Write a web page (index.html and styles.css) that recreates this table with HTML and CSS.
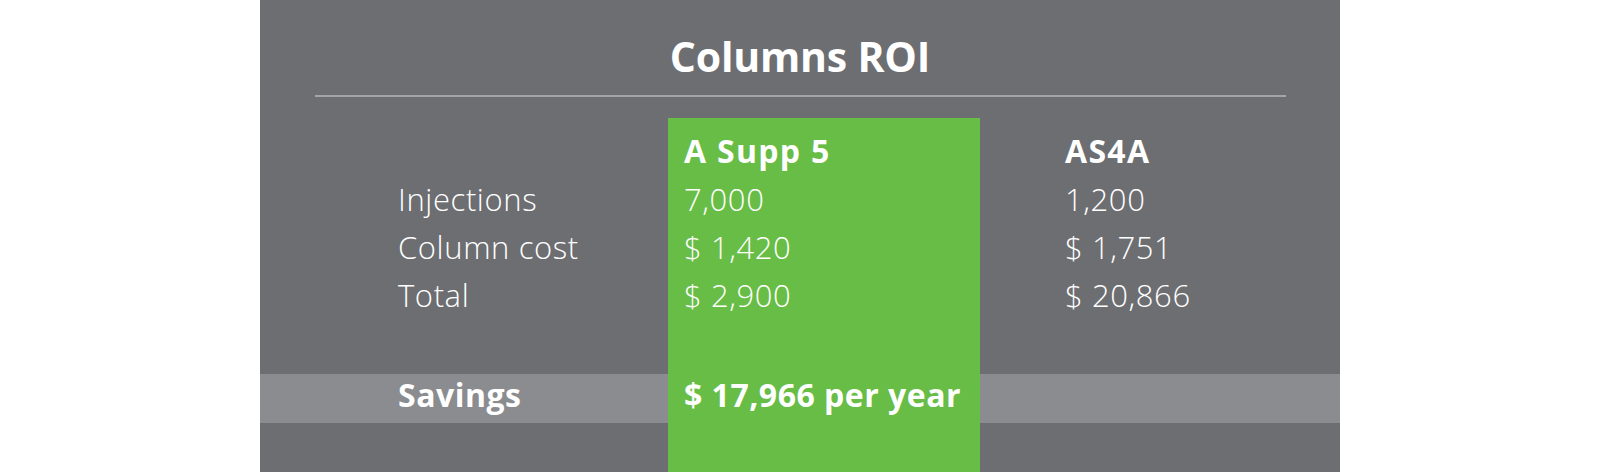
FILE: index.html
```html
<!DOCTYPE html>
<html lang="en">
<head>
<meta charset="utf-8">
<title>Columns ROI</title>
<link rel="stylesheet" href="styles.css">
</head>
<body>
<div class="panel">
  <h1 class="title">Columns ROI</h1>
  <hr class="rule">
  <div class="roi">
    <div class="row head">
      <div class="cell label"></div>
      <div class="cell mid">A Supp 5</div>
      <div class="cell right">AS4A</div>
    </div>
    <div class="row">
      <div class="cell label">Injections</div>
      <div class="cell mid">7,000</div>
      <div class="cell right">1,200</div>
    </div>
    <div class="row">
      <div class="cell label">Column cost</div>
      <div class="cell mid">$ 1,420</div>
      <div class="cell right">$ 1,751</div>
    </div>
    <div class="row">
      <div class="cell label">Total</div>
      <div class="cell mid">$ 2,900</div>
      <div class="cell right">$ 20,866</div>
    </div>
    <div class="row savings">
      <div class="cell label">Savings</div>
      <div class="cell mid">$ 17,966 per year</div>
      <div class="cell right"></div>
    </div>
  </div>
</div>
</body>
</html>
```
FILE: styles.css
```css
html, body {
  margin: 0;
  padding: 0;
  background: #ffffff;
}

.panel {
  width: 1080px;
  height: 472px;
  margin: 0 auto;
  display: flex;
  flex-direction: column;
  background: #6d6e72;
  color: #ffffff;
  font-family: "Open Sans", "Noto Sans", sans-serif;
  overflow: hidden;
}

.title {
  margin: 0;
  padding-top: 35px;
  font-size: 41px;
  line-height: 42px;
  font-weight: 700;
  text-align: center;
  letter-spacing: -0.2px;
}

.rule {
  flex: none;
  margin: 18px 54px 0 55px;
  border: 0;
  height: 2px;
  background: #a4a5a8;
}

.roi {
  flex: 1;
  margin-top: 21px;
  padding-top: 9px;
  background: linear-gradient(to right,
    transparent 0, transparent 408px,
    #67bd45 408px, #67bd45 720px,
    transparent 720px);
}

.row {
  display: grid;
  grid-template-columns: 408px 312px 1fr;
  height: 48px;
  line-height: 48px;
  font-size: 31px;
  font-weight: 300;
  letter-spacing: 0.6px;
  white-space: nowrap;
}

.row.head {
  font-size: 32px;
  font-weight: 700;
  letter-spacing: 1.3px;
}

.label {
  padding-left: 138px;
}

.mid {
  padding-left: 16px;
}

.right {
  padding-left: 85px;
}

.row.savings {
  margin-top: 55px;
  height: 49px;
  line-height: 41px;
  font-size: 32px;
  font-weight: 700;
  letter-spacing: 0.5px;
  background: #8b8c90;
}

.row.savings .mid {
  background: #67bd45;
}
```
